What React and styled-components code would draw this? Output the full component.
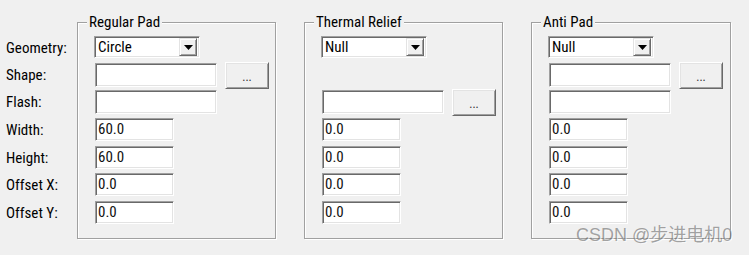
import React from "react";
import styled, { createGlobalStyle } from "styled-components";

const GlobalStyle = createGlobalStyle`
  html, body {
    margin: 0;
    padding: 0;
    background: #f0f0f0;
  }
  body {
    font-family: Roboto, "Liberation Sans", Arial, sans-serif;
    font-stretch: condensed;
    font-size: 15px;
    color: #000;
  }
`;

const ROWS = "27px 27px 28px 28px 27px 28px 23px";

const labels = ["Geometry:", "Shape:", "Flash:", "Width:", "Height:", "Offset X:", "Offset Y:"];

const groups = [
  {
    title: "Regular Pad",
    width: 199,
    geometry: "Circle",
    shape: true,
    shapeButton: true,
    flash: true,
    flashButton: false,
    values: ["60.0", "60.0", "0.0", "0.0"],
  },
  {
    title: "Thermal Relief",
    width: 199,
    geometry: "Null",
    shape: false,
    shapeButton: false,
    flash: true,
    flashButton: true,
    values: ["0.0", "0.0", "0.0", "0.0"],
  },
  {
    title: "Anti Pad",
    width: 200,
    geometry: "Null",
    shape: true,
    shapeButton: true,
    flash: true,
    flashButton: false,
    values: ["0.0", "0.0", "0.0", "0.0"],
  },
];

const Combo = ({ value }) => (
  <ComboBox>
    <ComboText>{value}</ComboText>
    <DropButton>
      <svg width="9" height="5" viewBox="0 0 9 5">
        <path d="M0 0 H9 L4.5 5 Z" fill="#000" />
      </svg>
    </DropButton>
  </ComboBox>
);

const PadGroup = ({ group }) => (
  <Group $w={group.width}>
    <Caption>{group.title}</Caption>
    <Rows>
      <Row>
        <Combo value={group.geometry} />
      </Row>
      <Row>
        {group.shape && <TextField $w={122} $h={24} />}
        {group.shapeButton && <DotsButton>...</DotsButton>}
      </Row>
      <Row>
        {group.flash && <TextField $w={122} $h={24} />}
        {group.flashButton && <DotsButton>...</DotsButton>}
      </Row>
      {group.values.map((v, i) => (
        <Row key={i}>
          <TextField $w={79} $h={23}>
            {v}
          </TextField>
        </Row>
      ))}
    </Rows>
  </Group>
);

const App = () => {
  return (
    <Page>
      <GlobalStyle />
      <LabelColumn>
        {labels.map((l) => (
          <Label key={l}>{l}</Label>
        ))}
      </LabelColumn>
      <Groups>
        {groups.map((g) => (
          <PadGroup key={g.title} group={g} />
        ))}
      </Groups>
      <Watermark>CSDN @步进电机0</Watermark>
    </Page>
  );
};

export default App;

const Page = styled.div`
  position: relative;
  display: flex;
  width: 749px;
  height: 255px;
  box-sizing: border-box;
  padding: 22px 0 0 6px;
`;

const LabelColumn = styled.div`
  width: 71px;
  margin-top: 14px;
  display: grid;
  grid-template-rows: ${ROWS};
  align-content: start;
`;

const Label = styled.div`
  line-height: 23px;
  padding-top: 1px;
  white-space: nowrap;
`;

const Groups = styled.div`
  display: flex;
  gap: 28px;
  align-items: flex-start;
`;

const Group = styled.div`
  width: ${(p) => p.$w}px;
  height: 217px;
  box-sizing: border-box;
  border: 1px solid #a0a0a0;
  box-shadow: inset 1px 1px 0 #fff, 1px 1px 0 #fff;
  padding-left: 17px;
`;

const Caption = styled.div`
  width: fit-content;
  margin: -9px 0 0 -8px;
  padding: 0 2px;
  line-height: 16px;
  background: #f0f0f0;
  white-space: nowrap;
`;

const Rows = styled.div`
  margin-top: 6px;
  display: grid;
  grid-template-rows: ${ROWS};
`;

const Row = styled.div`
  display: flex;
  align-items: flex-start;
  gap: 8px;
`;

const sunken = `
  border: 1px solid;
  border-color: #a0a0a0 #ffffff #ffffff #a0a0a0;
  box-shadow: inset 1px 1px 0 #696969, inset -1px -1px 0 #e3e3e3;
`;

const TextField = styled.div`
  ${sunken}
  width: ${(p) => p.$w}px;
  height: ${(p) => p.$h}px;
  box-sizing: border-box;
  background: #fff;
  padding: 0 0 0 2px;
  line-height: ${(p) => p.$h - 2}px;
  color: #111;
`;

const ComboBox = styled.div`
  ${sunken}
  width: 106px;
  height: 22px;
  box-sizing: border-box;
  margin-left: -1px;
  background: #fff;
  display: flex;
  align-items: center;
  padding: 2px;
`;

const ComboText = styled.span`
  flex: 1;
  line-height: 18px;
  padding-left: 1px;
`;

const DropButton = styled.div`
  width: 18px;
  height: 18px;
  box-sizing: border-box;
  background: #f0f0f0;
  border: 1px solid;
  border-color: #e3e3e3 #696969 #696969 #e3e3e3;
  box-shadow: inset 1px 1px 0 #fff, inset -1px -1px 0 #a0a0a0;
  display: flex;
  align-items: center;
  justify-content: center;
`;

const DotsButton = styled.div`
  width: 44px;
  height: 27px;
  margin-top: -1px;
  box-sizing: border-box;
  background: #f0f0f0;
  border: 1px solid;
  border-color: #ffffff #696969 #696969 #ffffff;
  box-shadow: inset 1px 1px 0 #e3e3e3, inset -1px -1px 0 #a0a0a0;
  display: flex;
  align-items: center;
  justify-content: center;
  font-size: 12px;
  color: #333;
  padding-top: 3px;
`;

const Watermark = styled.div`
  position: absolute;
  left: 576px;
  top: 224px;
  font-family: "Liberation Sans", "Noto Sans CJK SC", sans-serif;
  font-stretch: normal;
  font-size: 18px;
  line-height: 22px;
  color: rgba(90, 90, 90, 0.55);
  text-shadow: 1px 1px 0 rgba(255, 255, 255, 0.6);
  white-space: nowrap;
`;
